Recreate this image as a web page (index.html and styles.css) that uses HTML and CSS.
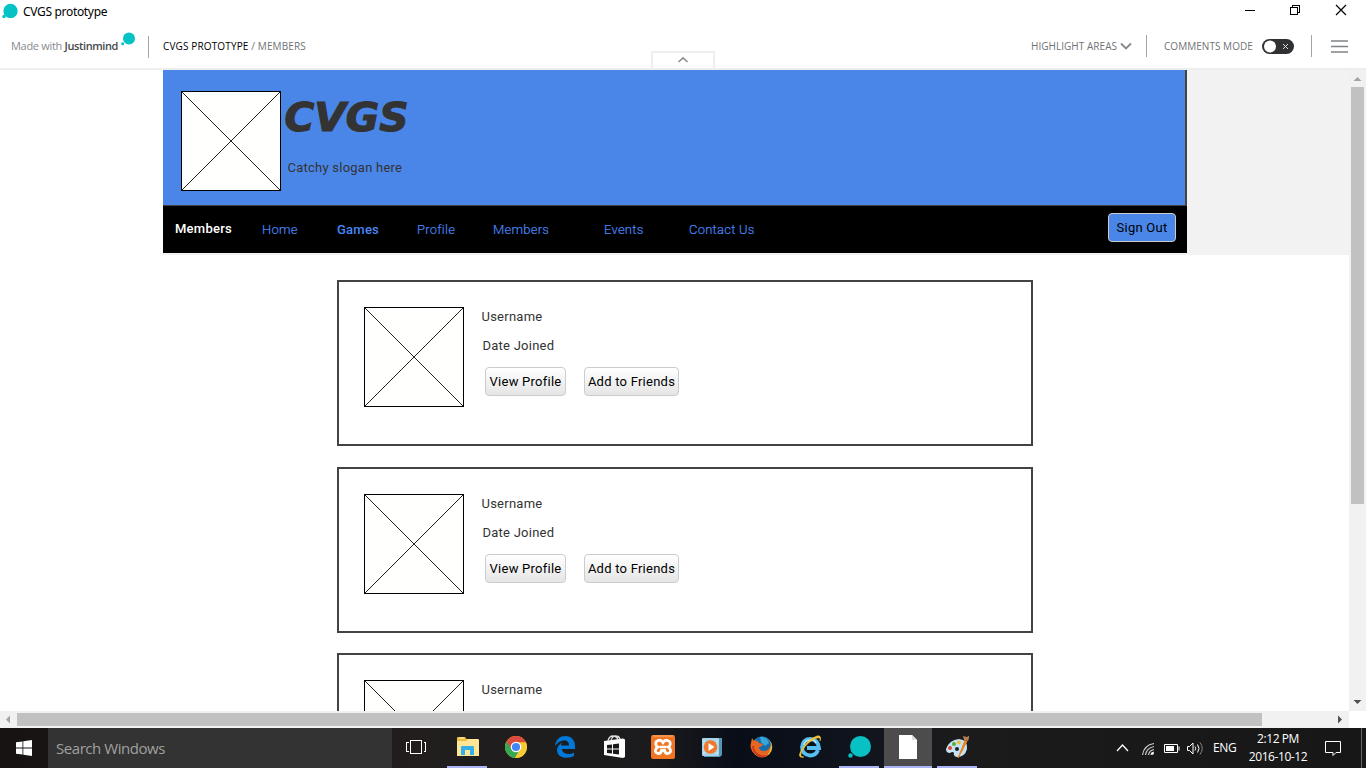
FILE: index.html
```html
<!DOCTYPE html>
<html lang="en">
<head>
<meta charset="utf-8">
<title>CVGS prototype</title>
<link rel="stylesheet" href="styles.css">
</head>
<body>
<svg class="defs" width="0" height="0">
  <symbol id="placeholder" viewBox="0 0 100 100"><rect x=".5" y=".5" width="99" height="99" fill="#fffffe" stroke="#000"/><path d="M1 1L99 99M99 1L1 99" stroke="#222" fill="none"/></symbol>
</svg>
<header class="titlebar">
  <svg class="app-icon" width="18" height="18"><circle cx="10.5" cy="11" r="7.2" fill="#05c2c4"/><circle cx="4" cy="16.5" r="1.7" fill="#05c2c4"/></svg>
  <span class="window-title">CVGS prototype</span>
  <svg class="window-controls" width="120" height="24" fill="none" stroke="#000" shape-rendering="crispEdges"><path d="M5 10.500h10M50.500 7.500h7v7h-7zM52.500 7v-1.500h7v7h-1.500"/><path d="M96 5l10 10M106 5L96 15" shape-rendering="auto" stroke-width="1.200"/></svg>
</header>
<div class="toolbar">
  <span class="made">Made with <b>Justinmind</b></span>
  <svg class="brand-dots" width="16" height="16"><circle cx="9" cy="6.500" r="6" fill="#05c2c4"/><circle cx="2.700" cy="11.800" r="1.500" fill="#05c2c4"/></svg>
  <i class="divider"></i>
  <span class="crumbs">CVGS PROTOTYPE <em>/ MEMBERS</em></span>
  <span class="collapse"><svg width="12" height="8"><path d="M1.500 6L6 1.800L10.500 6" fill="none" stroke="#8b8e92" stroke-width="1.600"/></svg></span>
  <span class="highlight">HIGHLIGHT AREAS</span>
  <svg class="chevron" width="12" height="8"><path d="M1 1.500l5 5 5-5" fill="none" stroke="#85888b" stroke-width="1.800"/></svg>
  <i class="divider"></i>
  <span class="comments">COMMENTS MODE</span>
  <svg class="toggle" width="32" height="15"><rect width="32" height="15" rx="7.500" fill="#2f3133"/><circle cx="8" cy="7.500" r="6" fill="#fff"/><path d="M21 5l5 5m0-5l-5 5" stroke="#ddd"/></svg>
  <i class="divider"></i>
  <svg class="burger" width="17" height="14"><path d="M0 2h17M0 7.500h17M0 13h17" stroke="#808386" stroke-width="1.700"/></svg>
</div>
<main class="viewport">
  <div class="page">
    <div class="band">
      <div class="site">
        <div class="hero">
          <svg class="pic" width="100" height="100"><use href="#placeholder"/></svg>
          <div class="brand">
            <svg class="logo" width="140" height="60"><text x="1.500" y="43.500" textLength="124" lengthAdjust="spacingAndGlyphs">CVGS</text></svg>
            <div class="slogan">Catchy slogan here</div>
          </div>
        </div>
        <nav class="nav">
          <span class="current">Members</span><a class="home">Home</a><a class="games">Games</a><a class="profile">Profile</a><a class="members">Members</a><a class="events">Events</a><a class="contact">Contact Us</a>
          <button class="btn signout">Sign Out</button>
        </nav>
      </div>
    </div>
    <section class="cards">
      <article class="card"><svg width="100" height="100"><use href="#placeholder"/></svg><div class="info"><div class="user">Username</div><div class="date">Date Joined</div><div class="actions"><button class="btn view">View Profile</button><button class="btn add">Add to Friends</button></div></div></article>
      <article class="card"><svg width="100" height="100"><use href="#placeholder"/></svg><div class="info"><div class="user">Username</div><div class="date">Date Joined</div><div class="actions"><button class="btn view">View Profile</button><button class="btn add">Add to Friends</button></div></div></article>
      <article class="card last"><svg width="100" height="100"><use href="#placeholder"/></svg><div class="info"><div class="user">Username</div></div></article>
    </section>
  </div>
  <div class="vscroll"><svg width="17" height="17"><path d="M4.500 11h8l-4-4z" fill="#a3a3a3"/></svg><i class="vthumb"></i><svg width="17" height="17"><path d="M4.500 6h8l-4 4z" fill="#505050"/></svg></div>
</main>
<div class="hscroll"><svg width="17" height="17"><path d="M10 4.500v8l-4-4z" fill="#a3a3a3"/></svg><i class="hthumb"></i><svg width="17" height="17"><path d="M6 4.500v8l4-4z" fill="#505050"/></svg></div>
<footer class="taskbar">
  <div class="start"><svg width="16" height="16" fill="#fff"><path d="M0 2.300L6.500 1.400V7.500H0zM7.300 1.200L16 0v7.500H7.300zM0 8.500h6.500v6.100L0 13.700zM7.300 8.500H16V16l-8.700-1.200z"/></svg></div>
  <div class="search">Search Windows</div>
  <div class="task taskview"><svg width="20" height="14" fill="none" stroke="#fff" shape-rendering="crispEdges"><path d="M4.500.5h11v13h-11zM2.500 2.500h-2v9h2M17.500 2.500h2v9h-2"/></svg></div>
  <div class="task open"><svg width="24" height="24"><path d="M2 3q0-1 1-1h7l1.500 2H23v17H2z" fill="#edbd40"/><path d="M2 6h9l2-2h10q1 0 1 1v16H2z" fill="#ffe697"/><path d="M4 3h5" stroke="#fff2bd"/><path d="M6 20v-8q0-1 1-1h11q1 0 1 1v8h-4v-5h-5v5z" fill="#33afe9"/></svg></div>
  <div class="task"><svg width="24" height="24"><circle cx="12" cy="12" r="11" fill="#f2c51f"/><path d="M12 12L2.500 6.500A11 11 0 0 0 11 23l5-9z" fill="#36a852"/><path d="M2.500 6.500A11 11 0 0 1 22 7.500H12L7.500 14z" fill="#dc4b3e"/><path d="M22 7.500H12l4.500 7L11 23A11 11 0 0 0 22 7.500" fill="#f6cb35"/><circle cx="12" cy="12" r="5.300" fill="#fff"/><circle cx="12" cy="12" r="4.100" fill="#4286f4"/></svg></div>
  <div class="task"><svg width="24" height="24"><path d="M2 11C3 4 7 1 12.500 1C18 1 22 5 22 11v3H9c0 4 4 5 7 5q3 0 5-1.500V21q-3 1.800-7 1.800C8 22.800 4 20 4 15c0-3 2-6 6-8-1.500 1-2 2.500-2 3.500h8c0-3-1.500-5-5-5C7 5.500 4 8 2 11z" fill="#0078d7"/></svg></div>
  <div class="task"><svg width="24" height="26"><path d="M2 7L21 4.500l2 1V23l-2 1-19-3z" fill="#fff"/><path d="M6 7q1-5 5-5t5 4M9 6q2-4.500 5-4 3 0 4 3" fill="none" stroke="#ddd" stroke-width="1.300"/><path d="M5 11l5-.6v4H5zM11 10.300l6-.8v5h-6zM5 15.500h5v4L5 19zM11 15.500h6v5l-6-.8z" fill="#1b1a1a"/></svg></div>
  <div class="task"><svg width="24" height="24"><rect width="24" height="24" rx="2" fill="#ef7622"/><path d="M2 1h20" stroke="#f6b17a"/><path d="M7.500 5.500q2.500-1 4.500 2 2-3 4.500-2 3.500 1 2.500 4.500-.5 1.500-2 2 2 1 2.500 3 .5 3-3 3.500-2.500 0-3-3h-3q-.5 3-3 3-3.500-.5-3-3.500.5-2 2.500-3-1.500-.5-2-2-1-3.500 2-4.500z" fill="none" stroke="#fff" stroke-width="2.800"/><path d="M9 12h6" stroke="#fff" stroke-width="2.600"/></svg></div>
  <div class="task"><svg width="24" height="24"><path d="M4 3h18v17l-2 2H4z" fill="#5596b9"/><rect x="2" y="3" width="17" height="18" rx="1" fill="#a9d3e8"/><path d="M4 5v14M17 5v14" stroke="#daf1fb" stroke-dasharray="2 1"/><circle cx="10.500" cy="12" r="6.800" fill="#f1782b"/><path d="M8.500 8v8l6-4z" fill="#fff"/></svg></div>
  <div class="task"><svg width="24" height="24"><circle cx="13" cy="12" r="10.300" fill="#e8b938"/><circle cx="13" cy="10" r="8.800" fill="#176cad"/><path d="M11 2q7-1 9 6l-4 3-4-4z" fill="#36a5da"/><path d="M3 3l2 3q4-1 5 2l4 1q-1 3-4 3 0 4 5 4 4 0 6-4 1 4-3 8-5 4-11 0Q0 15 2 8z" fill="#e76720"/><path d="M3 11q0 7 7 11 7 1 10-3-6 3-10 0-5-2-5-8z" fill="#cc381e"/></svg></div>
  <div class="task"><svg width="24" height="24"><path d="M20 15q-2 5.500-8 5.500-8-1-8-8.500 1-8 8.500-8Q20 4.500 21 13H9" fill="none" stroke="#56bff0" stroke-width="3.800"/><path d="M6 10q1-5 7-5 4 0 5 3" fill="none" stroke="#b9e8ff" stroke-width="1.500"/><path d="M6 22Q-2 24 4 14 10 4 19 1q5-1 3 5 1-4-3-3Q10 6 4 16q-3 6 2 6" fill="#f5c63c" stroke="#f5c63c" stroke-width=".6"/></svg></div>
  <div class="task open"><svg width="24" height="24"><circle cx="13.500" cy="11.500" r="10.500" fill="#08c1c4"/><circle cx="3.500" cy="20.500" r="2.200" fill="#08c1c4"/></svg></div>
  <div class="task open active"><svg width="20" height="24"><path d="M1 0h13l5 5v19H1z" fill="#fff"/><path d="M14 0v5h5" fill="#ddd"/></svg></div>
  <div class="task open"><svg width="24" height="24"><path d="M1 14Q4 5 14 4q9 1 8 10-2 8-10 8-4-1-3-4-1-2-4 0-4 0-4-4" fill="#c4e3f3"/><circle cx="5" cy="13" r="2" fill="#dc4a38"/><circle cx="9" cy="9" r="2" fill="#5cae40"/><circle cx="14" cy="7.500" r="2" fill="#efbd36"/><circle cx="12" cy="14" r="2" fill="#222"/><path d="M20 5q-3 8-7 18 5-8 9-17" fill="#e48727" stroke="#e48727"/><path d="M19 5l-1-4 4 1 3-2-2 6z" fill="#b67c4f"/></svg></div>
  <div class="tray">
    <svg width="126" height="24" fill="none" stroke="#fff"><path d="M18 15l5.500-6 5.500 6" stroke-width="1.300"/><path d="M43.500 19Q45 9 55 7.500M46.500 19q1-7 8.500-8.500M49.500 19q.5-4.500 5.500-5.500M52 19q0-2 3-3" stroke="#ccc" stroke-width="1.200"/><circle cx="53.500" cy="17.500" r="1.300" fill="#fff" stroke="none"/><path d="M65.500 8.500h13v8h-13zM80 10.500v4"/><path d="M67 10h8v5h-8z" fill="#fff" stroke="none"/><path d="M88.500 10.500h2l3.500-3.500v11l-3.500-3.500h-2zM96 10.500q1.500 2 0 4M98.500 8.500q3 4 0 8"/><path d="M101 6.500q4.500 6 0 12" stroke="#888"/></svg>
    <span class="lang">ENG</span>
    <span class="clock"><span class="time">2:12 PM</span><span class="day">2016-10-12</span></span>
    <svg class="note" width="17" height="17" fill="none" stroke="#fff"><path d="M.5 1.500h15v11H11l-3 3v-3H.500z"/></svg>
    <i class="peek"></i>
  </div>
</footer>
</body>
</html>
```
FILE: styles.css
```css
* { box-sizing: border-box; }
body { margin: 0; width: 1366px; height: 768px; overflow: hidden; display: flex; flex-direction: column; background: #fff; font-family: Roboto, "Liberation Sans", sans-serif; font-size: 13px; color: #333; }
svg { display: block; flex: none; }
.defs { position: absolute; }
.titlebar { height: 24px; display: flex; color: #000; }
.app-icon { margin-right: 5px; }
.window-title { font: 12px/24px "Noto Sans", sans-serif; letter-spacing: -.32px; }
.window-controls { margin-left: auto; margin-right: 6px; }
.toolbar { height: 46px; display: flex; align-items: flex-start; border-bottom: 2px solid #eee; font: 11px/16px "Open Sans", sans-serif; color: #707376; white-space: nowrap; }
.made { width: 109px; margin: 14px 0 0 11px; color: #888b8e; letter-spacing: -.3px; }
.made b { color: #45484b; font-weight: 600; letter-spacing: -.4px; }
.brand-dots { margin-top: 8px; }
.divider { flex: none; width: 1px; height: 22px; background: #a5a5a5; margin-top: 11px; }
.brand-dots + .divider { margin-left: 12px; margin-top: 12px; }
.crumbs { width: 488px; margin: 14px 0 0 14px; color: #000; font-size: 10px; letter-spacing: .14px; }
.crumbs em { color: #707376; font-style: normal; }
.collapse { width: 64px; height: 18px; margin-top: 27px; border: 2px solid #eee; border-bottom: 0; display: flex; justify-content: center; padding-top: 3px; }
.highlight { width: 85px; margin: 14px 0 0 316px; font-size: 10px; letter-spacing: .04px; }
.chevron { margin: 18px 14px 0 4px; }
.comments { width: 89px; margin: 14px 0 0 17px; font-size: 10px; letter-spacing: .04px; }
.toggle { margin: 15px 17px 0 9px; }
.burger { margin: 15px 0 0 19px; }
.viewport { height: 641px; display: flex; overflow: hidden; }
.page { width: 1349px; }
.band { margin-left: 163px; height: 185px; background: #f2f2f2; }
.site { width: 1024px; height: 183px; background: #000; }
.hero { height: 136px; display: flex; background: #4a86e8; border-right: 2px solid #434343; border-bottom: 1px solid #434343; }
.pic { margin: 21px 0 0 18px; }
.brand { margin: 17px 0 0 2px; }
.logo text { font-family: "DejaVu Sans", sans-serif; font-size: 39px; font-weight: 700; font-style: italic; fill: #333; stroke: #333; stroke-width: 1.2px; }
.slogan { margin: 13px 0 0 4.5px; line-height: 16px; letter-spacing: .24px; }
.nav { height: 47px; display: flex; line-height: 16px; color: #4a86f5; white-space: nowrap; }
.nav > span, .nav > a { flex: none; padding-top: 15px; letter-spacing: .24px; }
.nav .current { width: 87px; margin-left: 12px; color: #fff; font-weight: 500; }
.nav a { padding-top: 16px; font-weight: 300; -webkit-text-stroke: .2px #4a86f5; }
.home { width: 75px; }
.nav .games { width: 80px; font-weight: 500; -webkit-text-stroke: 0; }
.profile { width: 76px; }
.members { width: 111px; }
.events { width: 85px; }
.contact { width: 90px; }
.btn { height: 29px; padding: 0; border: 1px solid #ccc; border-radius: 4px; background: linear-gradient(#fff, #e5e5e5); font: 13px/26px Roboto, sans-serif; letter-spacing: .24px; color: #000; white-space: nowrap; }
.signout { width: 68px; margin: 7px 11px 0 auto; background: #4a86e8; }
.cards { width: 696px; margin: 25px 0 0 337px; display: flex; flex-direction: column; gap: 21px; }
.card { flex: none; height: 166px; border: 2px solid #434343; display: flex; padding: 25px 0 0 25px; }
.card.last { margin-top: -1px; }
.info { margin-left: 17.5px; letter-spacing: .24px; line-height: 16px; }
.user { margin-top: 2px; }
.date { margin: 13px 0 0 1px; }
.actions { display: flex; gap: 18px; margin: 13px 0 0 3.5px; }
.view { width: 81px; }
.add { width: 95px; }
.vscroll { width: 17px; background: #f1f1f1; display: flex; flex-direction: column; }
.vthumb { width: 13px; height: 417px; margin: 0 2px auto; background: #c1c1c1; }
.hscroll { width: 1349px; height: 17px; display: flex; background: #f1f1f1; }
.hthumb { width: 1245px; height: 13px; margin: 2px auto 0 0; background: #c1c1c1; }
.taskbar { height: 40px; display: flex; background: linear-gradient(90deg, #171312, #211e1d 31%, #1b1b1d 48%, #080d17 54%, #10141d 63%, #1b1b1c 70%, #181717); color: #fff; }
.start { width: 48px; padding: 12px 0 0 16px; }
.search { width: 344px; padding-left: 8px; background: #333; color: #a0a0a0; font: 15px/40px "Open Sans", sans-serif; letter-spacing: -.45px; }
.task { width: 40px; height: 40px; margin-right: 9px; display: flex; align-items: center; justify-content: center; border-bottom: 2px solid transparent; }
.taskview { width: 48px; margin-right: 7px; }
.task.open { border-bottom-color: #a9b3f5; }
.task.active { width: 48px; margin: 0 5px 0 -4px; background: #4c4c4d; }
.tray { display: flex; width: 267px; margin-left: auto; font: 12px/18px "Open Sans", sans-serif; white-space: nowrap; }
.tray > svg:first-child { margin: 8px -13px 0 0; }
.lang { width: 24px; margin: 11px 0 0 1px; letter-spacing: -.4px; }
.clock { width: 60px; margin: 2px 0 0 11px; display: flex; flex-direction: column; align-items: center; letter-spacing: -.42px; }
.note { margin: 12px 0 0 17px; }
.peek { width: 1px; height: 40px; margin-left: auto; margin-right: 4px; background: #666; }
```
